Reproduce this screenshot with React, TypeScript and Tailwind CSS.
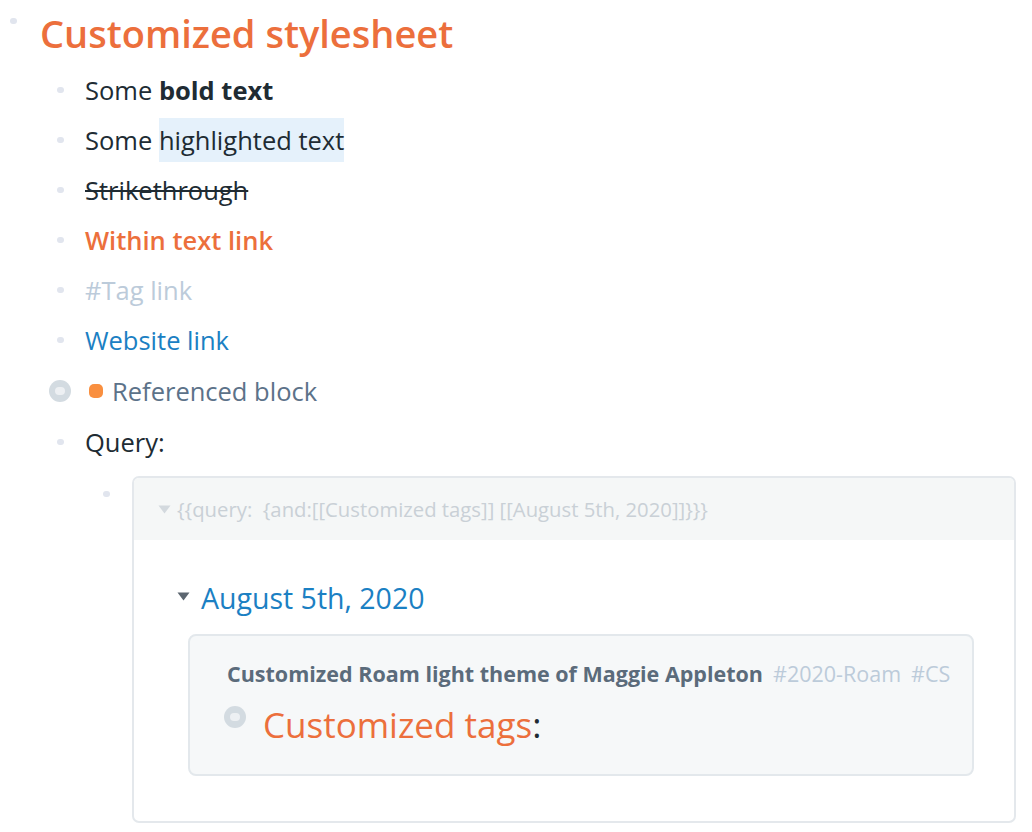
import React from 'react';

const Bullet = () => (
  <span className="block w-[7px] h-[6px] rounded-full bg-[#e1e5ee]" />
);

const Caret: React.FC<{ className: string }> = ({ className }) => (
  <svg width="13" height="9" viewBox="0 0 13 9" className={className}>
    <path d="M0.5 0.5 L12.5 0.5 L6.5 8.5 Z" fill="currentColor" />
  </svg>
);

const Row: React.FC<{ children: React.ReactNode }> = ({ children }) => (
  <div className="flex items-center h-[50px]">
    <div className="w-[28px] ml-[57px] flex items-center">
      <Bullet />
    </div>
    <div className="text-[25.5px] text-[#202b33]">{children}</div>
  </div>
);

const RefBullet = () => (
  <span className="flex items-center justify-center w-[22px] h-[22px] rounded-full bg-[#d3dbe1]">
    <span className="block w-[10px] h-[8px] rounded-full bg-[#edf0f3]" />
  </span>
);

export default function App() {
  return (
    <div className="min-h-[832px] bg-white font-['Open_Sans',sans-serif] pt-[8px]">
      {/* page title */}
      <div className="flex items-start">
        <div className="w-[40px] pl-[10px] pt-[10px]">
          <Bullet />
        </div>
        <h1 className="text-[38px] font-semibold leading-[50px] text-[#ec6f3c]">Customized stylesheet</h1>
      </div>

      <div className="mt-[7px]">
        <Row>
          Some <span className="font-bold">bold text</span>
        </Row>
        <Row>
          Some <span className="bg-[#e5f1fb] py-[5px]">highlighted text</span>
        </Row>
        <Row>
          <span className="line-through">Strikethrough</span>
        </Row>
        <Row>
          <span className="font-semibold text-[#ec6f3c]">Within text link</span>
        </Row>
        <Row>
          <span className="text-[#bccbda]">#Tag link</span>
        </Row>
        <Row>
          <span className="text-[#1b80c3]">Website link</span>
        </Row>

        <div className="flex items-center h-[52px]">
          <div className="ml-[49px] w-[40px]">
            <RefBullet />
          </div>
          <span className="block w-[14px] h-[14px] rounded-[5px] bg-[#f98f3f] mr-[9px]" />
          <span className="text-[25.5px] text-[#5c7289]">Referenced block</span>
        </div>

        <Row>Query:</Row>

        {/* query block */}
        <div className="flex items-start pt-[9px]">
          <div className="ml-[103px] w-[29px] pt-[15px]">
            <Bullet />
          </div>
          <div className="w-[884px] h-[347px] border-2 border-[#e4e8ec] rounded-[7px] overflow-hidden">
            <div className="h-[62px] bg-[#f5f7f7] flex items-center pl-[24px] text-[20.3px] text-[#c9d0d6]">
              <Caret className="text-[#d3d9de] mr-[6px]" />
              <span className="whitespace-pre">{'{{query:  {and:[[Customized tags]] [[August 5th, 2020]]}}}'}</span>
            </div>

            <div className="pl-[43px] pt-[38px]">
              <div className="flex items-center h-[40px]">
                <Caret className="text-[#5c6670] mr-[11px] -mt-[4px]" />
                <span className="text-[28.5px] text-[#1b80c3]">August 5th, 2020</span>
              </div>
            </div>

            <div className="ml-[54px] mr-[40px] mt-[16px] h-[142px] bg-[#f6f8f9] border-2 border-[#e3e8ec] rounded-[8px] pl-[37px] pt-[22px]">
              <div className="text-[21.5px] leading-[32px] whitespace-pre">
                <span className="font-bold text-[#5b6b7b]">Customized Roam light theme of Maggie Appleton</span>
                <span className="text-[#bccbda] ml-[10px]">#2020-Roam</span>
                <span className="text-[#bccbda] ml-[10px]">#CS</span>
              </div>
              <div className="flex items-start mt-[12px]">
                <div className="w-[39px] -ml-[3px] pt-[4px]">
                  <RefBullet />
                </div>
                <span className="text-[35px] leading-[46px] text-[#ec6f3c]">Customized tags</span>
                <span className="text-[35px] leading-[46px] text-[#202b33]">:</span>
              </div>
            </div>
          </div>
        </div>
      </div>
    </div>
  );
}
